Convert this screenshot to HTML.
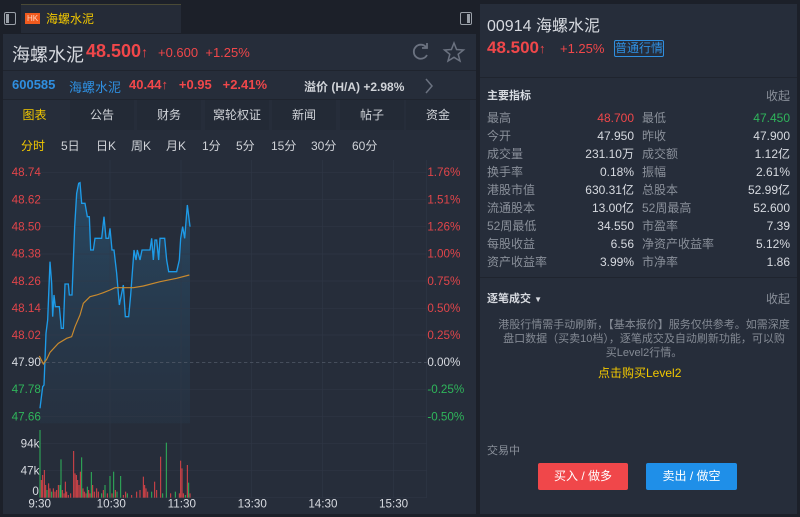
<!DOCTYPE html>
<html><head><meta charset="utf-8"><style>
*{margin:0;padding:0;box-sizing:border-box}
body{width:800px;height:517px;background:#1c2029;font-family:"Liberation Sans","Noto Sans CJK SC",sans-serif;position:relative;overflow:hidden;color:#d7dae0;font-size:12px}
.abs{position:absolute}
.red{color:#f0474a}.grn{color:#2fb55b}.gray{color:#8a909a}
.panel{background:#262d3a}
.tab{position:absolute;top:100px;height:30px;background:#232a36;text-align:center;line-height:30px;font-size:12px;color:#d0d3d8}
.per span{position:absolute;top:137px;font-size:12px;color:#d0d3d8}
.row{position:absolute;left:487px;width:303px;height:18px;font-size:12px;line-height:18px}
.row span{position:absolute;top:0;line-height:18px;height:18px}
</style></head><body>
<div class="abs" style="left:21px;top:4px;width:160px;height:29px;background:#252b37;border-top:1px solid #4a4a36"></div>
<div class="abs" style="left:4px;top:12px;width:12px;height:13px;border:1px solid #9aa0a8;border-radius:2px"><div style="position:absolute;left:1px;top:1px;width:3px;height:9px;background:#9aa0a8"></div></div>
<div class="abs" style="left:460px;top:12px;width:12px;height:13px;border:1px solid #9aa0a8;border-radius:2px"><div style="position:absolute;right:1px;top:1px;width:3px;height:9px;background:#9aa0a8"></div></div>
<div class="abs" style="left:25px;top:13px;width:15px;height:11px;background:#f05a1e;color:#fbd3c0;font-size:8px;line-height:11px;text-align:center">HK</div>
<div class="abs" style="left:46px;top:10px;font-size:12px;color:#f2c800">海螺水泥</div>
<div class="abs panel" style="left:3px;top:34px;width:473px;height:480px"></div>
<div class="abs" style="left:12px;top:41px;font-size:18px;color:#d7dae0">海螺水泥</div>
<div class="abs red" style="left:86px;top:41px;font-size:18px;font-weight:bold">48.500<span style="font-size:14px">↑</span></div>
<div class="abs red" style="left:158px;top:45px;font-size:13px">+0.600&nbsp; +1.25%</div>
<svg class="abs" style="left:408px;top:41px" width="60" height="22"><path d="M18 6 A7 7 0 1 0 19 14" fill="none" stroke="#6b7280" stroke-width="1.8"/><path d="M14 5 L19 5 L19 0" fill="none" stroke="#6b7280" stroke-width="1.8" transform="translate(0,2)"/><path d="M46 2 L48.6 8.5 L55.5 9 L50.2 13.3 L52 20 L46 16.3 L40 20 L41.8 13.3 L36.5 9 L43.4 8.5 Z" fill="none" stroke="#6b7280" stroke-width="1.5"/></svg>
<div class="abs" style="left:3px;top:70px;width:473px;height:1px;background:#1f242e"></div>
<div class="abs" style="left:12px;top:77px;font-size:13px;color:#2f8fe0;font-weight:bold">600585</div>
<div class="abs" style="left:69px;top:77px;font-size:13px;color:#2f8fe0">海螺水泥</div>
<div class="abs red" style="left:129px;top:77px;font-size:13px;font-weight:bold">40.44↑&nbsp;&nbsp; +0.95&nbsp;&nbsp; +2.41%</div>
<div class="abs" style="left:304px;top:78px;font-size:12px;color:#d0d3d8;font-weight:bold">溢价 (H/A) +2.98%</div>
<svg class="abs" style="left:424px;top:78px" width="10" height="16"><path d="M2 1 L8 8 L2 15" fill="none" stroke="#6b7280" stroke-width="1.5"/></svg>
<div class="abs" style="left:3px;top:99px;width:473px;height:1px;background:#1f242e"></div>
<div class="tab" style="left:3px;width:63px;background:#262d3a;color:#f2c800">图表</div>
<div class="tab" style="left:70px;width:64px">公告</div>
<div class="tab" style="left:137px;width:64px">财务</div>
<div class="tab" style="left:205px;width:64px">窝轮权证</div>
<div class="tab" style="left:272px;width:64px">新闻</div>
<div class="tab" style="left:340px;width:64px">帖子</div>
<div class="tab" style="left:406px;width:64px">资金</div>
<div class="per"><span style="left:21px;color:#f2c800">分时</span><span style="left:61px">5日</span><span style="left:96px">日K</span><span style="left:131px">周K</span><span style="left:166px">月K</span><span style="left:202px">1分</span><span style="left:236px">5分</span><span style="left:271px">15分</span><span style="left:311px">30分</span><span style="left:352px">60分</span></div>
<svg class="abs" style="left:0;top:160px" width="480" height="357" viewBox="0 0 1440 1071" font-family="Liberation Sans, sans-serif" font-size="35">
<defs><linearGradient id="g" x1="0" y1="0" x2="0" y2="1"><stop offset="0" stop-color="#2a6b96" stop-opacity="0.45"/><stop offset="1" stop-color="#2a4a66" stop-opacity="0.15"/></linearGradient></defs>
<polygon fill="url(#g)" points="120,745 128,680 132,675 138,520 143,480 150,305 155,370 158,470 162,405 166,440 178,440 184,505 190,505 195,372 205,372 208,405 216,405 224,200 230,100 236,70 240,68 245,130 255,130 262,170 268,170 272,270 280,270 285,235 305,235 312,170 318,235 326,235 330,205 336,270 342,270 350,340 358,435 364,405 370,375 376,470 386,470 392,405 402,270 408,300 412,270 420,300 426,270 450,270 455,235 460,300 465,240 470,240 476,300 480,235 494,235 500,300 506,335 530,335 538,300 542,235 548,200 554,235 562,135 570,200 570,790 120,790"/>
<g stroke="#313948" stroke-width="2" opacity="0.8">
<line x1="120" y1="37" x2="1280" y2="37"/><line x1="120" y1="118" x2="1280" y2="118"/><line x1="120" y1="200" x2="1280" y2="200"/><line x1="120" y1="282" x2="1280" y2="282"/><line x1="120" y1="363" x2="1280" y2="363"/><line x1="120" y1="445" x2="1280" y2="445"/><line x1="120" y1="525" x2="1280" y2="525"/><line x1="120" y1="688" x2="1280" y2="688"/><line x1="120" y1="770" x2="1280" y2="770"/><line x1="120" y1="850" x2="1280" y2="850"/><line x1="120" y1="932" x2="1280" y2="932"/><line x1="120" y1="1013" x2="1280" y2="1013"/>
<line x1="330" y1="0" x2="330" y2="1013"/><line x1="543" y1="0" x2="543" y2="1013"/><line x1="755" y1="0" x2="755" y2="1013"/><line x1="968" y1="0" x2="968" y2="1013"/><line x1="1180" y1="0" x2="1180" y2="1013"/><line x1="1280" y1="0" x2="1280" y2="1013"/>
</g>
<line x1="120" y1="607" x2="1280" y2="607" stroke="#5a6270" stroke-width="2" stroke-dasharray="10 8"/>
<polyline fill="none" stroke="#1e9be8" stroke-width="4" points="120,745 128,680 132,675 138,520 143,480 150,305 155,370 158,470 162,405 166,440 178,440 184,505 190,505 195,372 205,372 208,405 216,405 224,200 230,100 236,70 240,68 245,130 255,130 262,170 268,170 272,270 280,270 285,235 305,235 312,170 318,235 326,235 330,205 336,270 342,270 350,340 358,435 364,405 370,375 376,470 386,470 392,405 402,270 408,300 412,270 420,300 426,270 450,270 455,235 460,300 465,240 470,240 476,300 480,235 494,235 500,300 506,335 530,335 538,300 542,235 548,200 554,235 562,135 570,200"/>
<polyline fill="none" stroke="#c98a2e" stroke-width="3.5" points="118,588 130,612 140,598 150,577 175,550 200,535 215,530 225,500 240,465 250,430 270,410 290,405 310,398 330,390 345,383 400,383 430,378 480,365 530,355 568,345"/>
<g stroke-width="3">
<line x1="120" y1="1013" x2="120" y2="810" stroke="#2fb55b"/><line x1="124" y1="1013" x2="124" y2="960" stroke="#e04448"/><line x1="128" y1="1013" x2="128" y2="945" stroke="#e04448"/><line x1="133" y1="1013" x2="133" y2="930" stroke="#e04448"/><line x1="137" y1="1013" x2="137" y2="975" stroke="#e04448"/><line x1="141" y1="1013" x2="141" y2="990" stroke="#2fb55b"/><line x1="146" y1="1013" x2="146" y2="970" stroke="#e04448"/><line x1="150" y1="1013" x2="150" y2="985" stroke="#e04448"/><line x1="155" y1="1013" x2="155" y2="995" stroke="#2fb55b"/><line x1="160" y1="1013" x2="160" y2="985" stroke="#e04448"/><line x1="165" y1="1013" x2="165" y2="995" stroke="#e04448"/><line x1="170" y1="1013" x2="170" y2="990" stroke="#e04448"/><line x1="175" y1="1013" x2="175" y2="975" stroke="#e04448"/><line x1="180" y1="1013" x2="180" y2="975" stroke="#2fb55b"/><line x1="183" y1="1013" x2="183" y2="898" stroke="#2fb55b"/><line x1="187" y1="1013" x2="187" y2="990" stroke="#e04448"/><line x1="192" y1="1013" x2="192" y2="1000" stroke="#e04448"/><line x1="196" y1="1013" x2="196" y2="965" stroke="#e04448"/><line x1="200" y1="1013" x2="200" y2="995" stroke="#e04448"/><line x1="205" y1="1013" x2="205" y2="1005" stroke="#e04448"/><line x1="212" y1="1013" x2="212" y2="1000" stroke="#e04448"/><line x1="221" y1="1013" x2="221" y2="873" stroke="#e04448"/><line x1="225" y1="1013" x2="225" y2="940" stroke="#e04448"/><line x1="229" y1="1013" x2="229" y2="945" stroke="#e04448"/><line x1="233" y1="1013" x2="233" y2="960" stroke="#e04448"/><line x1="237" y1="1013" x2="237" y2="975" stroke="#e04448"/><line x1="241" y1="1013" x2="241" y2="935" stroke="#e04448"/><line x1="245" y1="1013" x2="245" y2="892" stroke="#2fb55b"/><line x1="249" y1="1013" x2="249" y2="985" stroke="#e04448"/><line x1="253" y1="1013" x2="253" y2="995" stroke="#e04448"/><line x1="258" y1="1013" x2="258" y2="1000" stroke="#e04448"/><line x1="262" y1="1013" x2="262" y2="980" stroke="#2fb55b"/><line x1="266" y1="1013" x2="266" y2="990" stroke="#e04448"/><line x1="270" y1="1013" x2="270" y2="1000" stroke="#e04448"/><line x1="274" y1="1013" x2="274" y2="936" stroke="#2fb55b"/><line x1="278" y1="1013" x2="278" y2="975" stroke="#e04448"/><line x1="283" y1="1013" x2="283" y2="995" stroke="#e04448"/><line x1="290" y1="1013" x2="290" y2="985" stroke="#e04448"/><line x1="295" y1="1013" x2="295" y2="995" stroke="#e04448"/><line x1="305" y1="1013" x2="305" y2="1000" stroke="#2fb55b"/><line x1="310" y1="1013" x2="310" y2="990" stroke="#e04448"/><line x1="315" y1="1013" x2="315" y2="975" stroke="#2fb55b"/><line x1="322" y1="1013" x2="322" y2="1000" stroke="#e04448"/><line x1="330" y1="1013" x2="330" y2="948" stroke="#2fb55b"/><line x1="336" y1="1013" x2="336" y2="1000" stroke="#e04448"/><line x1="341" y1="1013" x2="341" y2="935" stroke="#2fb55b"/><line x1="346" y1="1013" x2="346" y2="990" stroke="#e04448"/><line x1="351" y1="1013" x2="351" y2="995" stroke="#2fb55b"/><line x1="362" y1="1013" x2="362" y2="948" stroke="#2fb55b"/><line x1="370" y1="1013" x2="370" y2="1005" stroke="#e04448"/><line x1="377" y1="1013" x2="377" y2="995" stroke="#e04448"/><line x1="382" y1="1013" x2="382" y2="1000" stroke="#2fb55b"/><line x1="395" y1="1013" x2="395" y2="1005" stroke="#e04448"/><line x1="410" y1="1013" x2="410" y2="995" stroke="#e04448"/><line x1="420" y1="1013" x2="420" y2="990" stroke="#e04448"/><line x1="430" y1="1013" x2="430" y2="950" stroke="#e04448"/><line x1="434" y1="1013" x2="434" y2="975" stroke="#e04448"/><line x1="438" y1="1013" x2="438" y2="985" stroke="#e04448"/><line x1="443" y1="1013" x2="443" y2="995" stroke="#e04448"/><line x1="455" y1="1013" x2="455" y2="995" stroke="#2fb55b"/><line x1="464" y1="1013" x2="464" y2="965" stroke="#e04448"/><line x1="470" y1="1013" x2="470" y2="990" stroke="#e04448"/><line x1="482" y1="1013" x2="482" y2="890" stroke="#e04448"/><line x1="488" y1="1013" x2="488" y2="1000" stroke="#2fb55b"/><line x1="499" y1="1013" x2="499" y2="848" stroke="#2fb55b"/><line x1="512" y1="1013" x2="512" y2="1000" stroke="#e04448"/><line x1="526" y1="1013" x2="526" y2="995" stroke="#2fb55b"/><line x1="538" y1="1013" x2="538" y2="1000" stroke="#e04448"/><line x1="542" y1="1013" x2="542" y2="902" stroke="#e04448"/><line x1="546" y1="1013" x2="546" y2="925" stroke="#e04448"/><line x1="550" y1="1013" x2="550" y2="1000" stroke="#e04448"/><line x1="556" y1="1013" x2="556" y2="1005" stroke="#2fb55b"/><line x1="562" y1="1013" x2="562" y2="915" stroke="#e04448"/><line x1="566" y1="1013" x2="566" y2="968" stroke="#2fb55b"/><line x1="570" y1="1013" x2="570" y2="1000" stroke="#e04448"/>
</g>
<g fill="#e0454a"><text x="35" y="48">48.74</text><text x="35" y="130">48.62</text><text x="35" y="212">48.50</text><text x="35" y="293">48.38</text><text x="35" y="375">48.26</text><text x="35" y="456">48.14</text><text x="35" y="537">48.02</text>
<text x="1282" y="48">1.76%</text><text x="1282" y="130">1.51%</text><text x="1282" y="212">1.26%</text><text x="1282" y="293">1.00%</text><text x="1282" y="375">0.75%</text><text x="1282" y="456">0.50%</text><text x="1282" y="537">0.25%</text></g>
<g fill="#d7dae0"><text x="35" y="618">47.90</text><text x="1282" y="618">0.00%</text><text x="62" y="862">94k</text><text x="62" y="944">47k</text><text x="97" y="1005">0</text>
<text x="85" y="1043">9:30</text><text x="290" y="1043">10:30</text><text x="503" y="1043">11:30</text><text x="713" y="1043">13:30</text><text x="925" y="1043">14:30</text><text x="1137" y="1043">15:30</text></g>
<g fill="#2fb55b"><text x="35" y="699">47.78</text><text x="35" y="781">47.66</text><text x="1282" y="699">-0.25%</text><text x="1282" y="781">-0.50%</text></g>
</svg>
<div class="abs panel" style="left:480px;top:4px;width:317px;height:510px"></div>
<div class="abs" style="left:480px;top:77px;width:317px;height:1px;background:#1f242e"></div>
<div class="abs" style="left:487px;top:12px;font-size:16px;color:#d7dae0">00914 海螺水泥</div>
<div class="abs red" style="left:487px;top:38px;font-size:17px;font-weight:bold">48.500<span style="font-size:13px">↑</span></div>
<div class="abs red" style="left:560px;top:41px;font-size:13px">+1.25%</div>
<div class="abs" style="left:614px;top:40px;width:50px;height:17px;border:1px solid #2f8fe0;border-radius:2px;color:#2f8fe0;font-size:12px;line-height:15px;text-align:center">普通行情</div>
<div class="abs" style="left:487px;top:87px;font-size:11px;font-weight:bold;color:#d7dae0">主要指标</div>
<div class="abs gray" style="left:766px;top:87px;font-size:12px">收起</div>
<div class="row" style="top:109px"><span class="gray">最高</span><span class="red" style="right:156px">48.700</span><span class="gray" style="left:155px">最低</span><span class="grn" style="right:0">47.450</span></div>
<div class="row" style="top:127px"><span class="gray">今开</span><span style="right:156px">47.950</span><span class="gray" style="left:155px">昨收</span><span style="right:0">47.900</span></div>
<div class="row" style="top:145px"><span class="gray">成交量</span><span style="right:156px">231.10万</span><span class="gray" style="left:155px">成交额</span><span style="right:0">1.12亿</span></div>
<div class="row" style="top:163px"><span class="gray">换手率</span><span style="right:156px">0.18%</span><span class="gray" style="left:155px">振幅</span><span style="right:0">2.61%</span></div>
<div class="row" style="top:181px"><span class="gray">港股市值</span><span style="right:156px">630.31亿</span><span class="gray" style="left:155px">总股本</span><span style="right:0">52.99亿</span></div>
<div class="row" style="top:199px"><span class="gray">流通股本</span><span style="right:156px">13.00亿</span><span class="gray" style="left:155px">52周最高</span><span style="right:0">52.600</span></div>
<div class="row" style="top:217px"><span class="gray">52周最低</span><span style="right:156px">34.550</span><span class="gray" style="left:155px">市盈率</span><span style="right:0">7.39</span></div>
<div class="row" style="top:235px"><span class="gray">每股收益</span><span style="right:156px">6.56</span><span class="gray" style="left:155px">净资产收益率</span><span style="right:0">5.12%</span></div>
<div class="row" style="top:253px"><span class="gray">资产收益率</span><span style="right:156px">3.99%</span><span class="gray" style="left:155px">市净率</span><span style="right:0">1.86</span></div>
<div class="abs" style="left:480px;top:277px;width:317px;height:1px;background:#1f242e"></div>
<div class="abs" style="left:487px;top:290px;font-size:11px;font-weight:bold;color:#d7dae0">逐笔成交 <span style="font-size:8px">▼</span></div>
<div class="abs gray" style="left:766px;top:290px;font-size:12px">收起</div>
<div class="abs" style="left:498px;top:318px;width:292px;font-size:11px;line-height:14px;color:#848a94;text-align:center">港股行情需手动刷新，【基本报价】服务仅供参考。如需深度盘口数据（买卖10档），逐笔成交及自动刷新功能，可以购买Level2行情。</div>
<div class="abs" style="left:598px;top:364px;font-size:12px;color:#f2c800">点击购买Level2</div>
<div class="abs gray" style="left:487px;top:442px;font-size:11px">交易中</div>
<div class="abs" style="left:538px;top:463px;width:90px;height:27px;background:#f0474a;border-radius:2px;color:#fff;text-align:center;line-height:27px;font-size:12px">买入 / 做多</div>
<div class="abs" style="left:646px;top:463px;width:91px;height:27px;background:#1f8fe8;border-radius:2px;color:#fff;text-align:center;line-height:27px;font-size:12px">卖出 / 做空</div>
</body></html>
